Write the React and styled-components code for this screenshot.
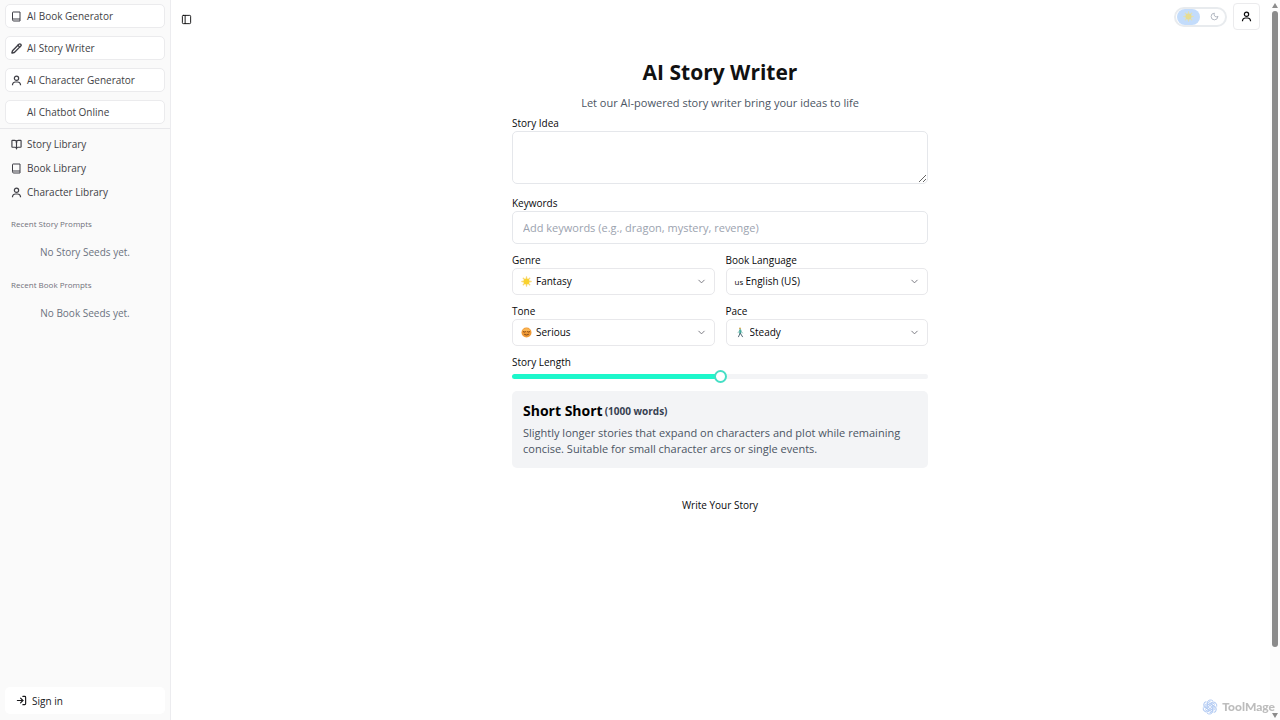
import React, { useState } from "react";
import styled, { createGlobalStyle } from "styled-components";
import { BookOpen, ChevronDown, LogIn, Moon, PanelLeft, Pencil } from "lucide-react";

const GlobalStyle = createGlobalStyle`
  * {
    box-sizing: border-box;
  }
  body {
    margin: 0;
    overflow: hidden;
    background: #fff;
    color: #09090b;
    font-family: "Open Sans", "Noto Sans", sans-serif;
    font-size: 10px;
    line-height: 16px;
  }
  button, input, select, textarea {
    font: inherit;
    color: inherit;
  }
`;

const Page = styled.div`
  display: flex;
  height: 100vh;
`;
const Sidebar = styled.aside`
  display: flex;
  flex-direction: column;
  width: 170px;
  flex-shrink: 0;
  background: #fafafa;
  box-shadow: 1px 0 0 #ececef;
  color: #3f3f46;
`;
const Tools = styled.nav`
  display: flex;
  flex-direction: column;
  gap: 8px;
  padding: 4px 5px;
  border-bottom: 1px solid #e8e8eb;
`;
const ToolLink = styled.a`
  display: flex;
  align-items: center;
  gap: 5px;
  height: 24px;
  padding: 0 5px;
  background: #fff;
  border: 1px solid #ebebed;
  border-radius: 5px;
  color: inherit;
  text-decoration: none;
`;
const IconSlot = styled.span`
  display: flex;
  width: 11px;
  flex-shrink: 0;
`;
const Library = styled.nav`
  display: flex;
  flex-direction: column;
  padding: 3px 5px 12px;
`;
const LibraryLink = styled.a`
  display: flex;
  align-items: center;
  gap: 5px;
  height: 24px;
  padding: 0 6px;
  color: inherit;
  text-decoration: none;
`;
const Recent = styled.section`
  padding: 0 11px 17px;
`;
const RecentTitle = styled.h2`
  margin: 0 0 12px;
  font-size: 8px;
  font-weight: 400;
  color: #71717a;
`;
const RecentEmpty = styled.p`
  margin: 0;
  text-align: center;
  color: #6b7280;
`;
const SignIn = styled.button`
  display: flex;
  align-items: center;
  gap: 5px;
  height: 27px;
  margin: auto 5px 6px;
  padding: 0 11px;
  border: none;
  border-radius: 5px;
  background: #fff;
  color: #18181b;
`;
const Main = styled.main`
  flex: 1;
  min-width: 0;
`;
const TopBar = styled.header`
  display: flex;
  align-items: center;
  gap: 6px;
  padding: 3px 10px 3px 11px;
`;
const PlainButton = styled.button`
  display: flex;
  align-items: center;
  align-self: flex-end;
  height: 22px;
  margin-right: auto;
  padding: 0;
  border: none;
  background: none;
`;
const ThemeSwitch = styled.button`
  display: flex;
  align-items: center;
  justify-content: space-between;
  width: 53px;
  height: 20px;
  padding: 0 6px 0 1px;
  border: 2px solid #e8ebee;
  border-radius: 10px;
  background: #fff;
  color: #9ca3af;
`;
const SwitchKnob = styled.span`
  display: flex;
  align-items: center;
  justify-content: center;
  width: 23px;
  height: 16px;
  border-radius: 8px;
  background: #c3dcfb;
`;
const ProfileButton = styled.button`
  display: flex;
  align-items: center;
  justify-content: center;
  width: 27px;
  height: 27px;
  padding: 0;
  border: 1px solid #ebebed;
  border-radius: 4px;
  background: #fff;
`;
const Content = styled.div`
  max-width: 416px;
  margin: 0 auto;
  padding-top: 23px;
`;
const Title = styled.h1`
  margin: 0 0 7px;
  font-size: 21px;
  font-weight: 700;
  line-height: 32px;
  text-align: center;
  color: #111;
`;
const Subtitle = styled.p`
  margin: 0 0 4px;
  font-size: 11px;
  text-align: center;
  color: #4b5563;
`;
const Form = styled.form`
  display: flex;
  flex-direction: column;
  gap: 8px;
`;
const Field = styled.div`
  display: flex;
  flex-direction: column;
`;
const FieldRow = styled.div`
  display: grid;
  grid-template-columns: 1fr 1fr;
  gap: 11px;
`;
const IdeaBox = styled.textarea`
  height: 53px;
  margin-bottom: 3px;
  padding: 6px 10px;
  border: 1px solid #e5e7eb;
  border-radius: 5px;
  background: #fff;
  resize: vertical;
`;
const KeywordInput = styled.input`
  width: 100%;
  height: 33px;
  padding: 0 10px 1px;
  border: 1px solid #e5e7eb;
  border-radius: 5px;
  background: #fff;
  font-size: 11px;
  &::placeholder {
    color: #9ca3af;
  }
`;
const SelectWrap = styled.div`
  position: relative;
  display: flex;
`;
const Select = styled.select`
  width: 100%;
  height: 27px;
  padding: 0 24px 2px ${(props) => (props.$wide ? "19px" : "23px")};
  appearance: none;
  border: 1px solid #e8e8eb;
  border-radius: 5px;
  background: #fff;
`;
const SelectMark = styled.span`
  position: absolute;
  left: 9px;
  top: 0;
  height: 27px;
  display: flex;
  align-items: center;
  font-size: 8px;
  pointer-events: none;
`;
const SelectArrow = styled(ChevronDown)`
  position: absolute;
  right: 8px;
  top: 8px;
  color: #71717a;
  pointer-events: none;
`;
const Slider = styled.input`
  width: 100%;
  height: 13px;
  margin: 0;
  appearance: none;
  background: none;
  &::-webkit-slider-runnable-track {
    height: 5px;
    border-radius: 3px;
    background: linear-gradient(
      to right,
      #1df7cb ${(props) => props.$fill}%,
      #f3f4f6 ${(props) => props.$fill}%
    );
  }
  &::-webkit-slider-thumb {
    appearance: none;
    width: 13px;
    height: 13px;
    margin-top: -4px;
    border: 2px solid #45dfc5;
    border-radius: 50%;
    background: #fff;
  }
`;
const LengthCard = styled.div`
  padding: 11px;
  border-radius: 5px;
  background: #f3f4f6;
`;
const LengthTitle = styled.h3`
  display: flex;
  align-items: center;
  gap: 2px;
  margin: 0 0 5px;
  font-size: 14px;
  line-height: 18px;
  color: #000;
`;
const WordCount = styled.span`
  font-size: 10px;
  color: #374151;
`;
const LengthText = styled.p`
  margin: 0;
  font-size: 11px;
  color: #4b5563;
`;
const SubmitButton = styled.button`
  align-self: center;
  margin-top: 16px;
  padding: 5px 11px;
  border: none;
  background: none;
`;
const Rail = styled.div`
  display: flex;
  flex-direction: column;
  align-items: center;
  gap: 2px;
  width: 10px;
  padding: 3px 0 2px;
  flex-shrink: 0;
  background: #fcfcfc;
`;
const RailTrack = styled.div`
  flex: 1;
`;
const RailThumb = styled.div`
  width: 6px;
  height: 91%;
  border-radius: 3px;
  background: #8b8b8b;
`;
const Watermark = styled.div`
  position: fixed;
  right: 5px;
  bottom: 4px;
  display: flex;
  align-items: center;
  gap: 4px;
  font-family: Lato, sans-serif;
  font-size: 12px;
  font-weight: 900;
  line-height: 18px;
  color: #bdbdbd;
`;

const BookIcon = () => (
  <svg width="11" height="11" viewBox="0 0 22 22" fill="none" stroke="currentColor" strokeWidth="2">
    <path d="M4 2h14v18H5.500A2.500 2.500 0 0 1 3 17.500V3a1 1 0 0 1 1-1z" strokeLinejoin="round" />
    <path d="M3 16h15" />
  </svg>
);

const UserIcon = () => (
  <svg width="11" height="11" viewBox="0 0 22 22" fill="none" stroke="currentColor" strokeWidth="2.4">
    <circle cx="11" cy="6.500" r="4.300" />
    <path d="M3 20.500v-1.500a6 6 0 0 1 6-5h4a6 6 0 0 1 6 5v1.500" />
  </svg>
);

const SunIcon = ({ size, color, core }) => (
  <svg width={size} height={size} viewBox="0 0 24 24">
    <g stroke={color} strokeWidth="3" strokeLinecap="round">
      <path d="M12 2v20M2 12h20M5 5l14 14M19 5L5 19" />
    </g>
    <circle cx="12" cy="12" r="6.5" fill={core} />
  </svg>
);

const FaceIcon = () => (
  <svg width="11" height="11" viewBox="0 0 22 22">
    <circle cx="11" cy="11" r="10" fill="#f09a35" />
    <path d="M3 8a8.5 8.5 0 0 1 16 0z" fill="#fbb654" />
    <path
      d="M4.500 9.500q2 2 4.500 0M13 9.500q2.500 2 4.500 0M7 15q4 2.500 8 0"
      fill="none"
      stroke="#713d17"
      strokeWidth="1.700"
      strokeLinecap="round"
    />
  </svg>
);

const WalkerIcon = () => (
  <svg width="11" height="11" viewBox="0 0 22 22" fill="none" strokeLinecap="round">
    <circle cx="10" cy="3" r="2" fill="#d5a64e" />
    <path d="M10.500 6.500v6" stroke="#3ba79b" strokeWidth="4" />
    <path d="M9 7.500l-3 4M12 8l3 4" stroke="#79b8ae" strokeWidth="1.500" />
    <path d="M10 13l-3 6.500M11 13l4 6.500" stroke="#576b78" strokeWidth="2" />
  </svg>
);

const petals = [0, 60, 120, 180, 240, 300];

const KnotLogo = () => (
  <svg width="16" height="16" viewBox="0 0 32 32" fill="none" stroke="#b3cbf3" strokeWidth="2">
    {petals.map((angle) => (
      <path
        key={angle}
        transform={`rotate(${angle} 16 16)`}
        d="M10 18V9a7 7 0 0 1 12-5M10 13l7-4a7 7 0 0 1 9 2"
      />
    ))}
    <circle cx="16" cy="16" r="3" />
  </svg>
);

const tools = [
  { name: "AI Book Generator", icon: <BookIcon /> },
  { name: "AI Story Writer", icon: <Pencil size={11} strokeWidth={3} /> },
  { name: "AI Character Generator", icon: <UserIcon /> },
  { name: "AI Chatbot Online" },
];

const libraries = [
  { name: "Story Library", icon: <BookOpen size={11} strokeWidth={2.5} /> },
  { name: "Book Library", icon: <BookIcon /> },
  { name: "Character Library", icon: <UserIcon /> },
];

const SelectField = ({ id, label, mark, options, wide }) => (
  <Field>
    <label htmlFor={id}>{label}</label>
    <SelectWrap>
      <Select id={id} $wide={wide}>
        {options.map((option) => (
          <option key={option}>{option}</option>
        ))}
      </Select>
      <SelectMark>{mark}</SelectMark>
      <SelectArrow size={11} />
    </SelectWrap>
  </Field>
);

const App = () => {
  const [idea, setIdea] = useState("");
  const [keywords, setKeywords] = useState("");
  const [length, setLength] = useState(50);
  const [light, setLight] = useState(true);

  const handleSubmit = (e) => {
    e.preventDefault();
  };

  return (
    <Page>
      <GlobalStyle />
      <Sidebar>
        <Tools>
          {tools.map((tool) => (
            <ToolLink key={tool.name} href="#">
              <IconSlot>{tool.icon}</IconSlot>
              {tool.name}
            </ToolLink>
          ))}
        </Tools>
        <Library>
          {libraries.map((item) => (
            <LibraryLink key={item.name} href="#">
              <IconSlot>{item.icon}</IconSlot>
              {item.name}
            </LibraryLink>
          ))}
        </Library>
        <Recent>
          <RecentTitle>Recent Story Prompts</RecentTitle>
          <RecentEmpty>No Story Seeds yet.</RecentEmpty>
        </Recent>
        <Recent>
          <RecentTitle>Recent Book Prompts</RecentTitle>
          <RecentEmpty>No Book Seeds yet.</RecentEmpty>
        </Recent>
        <SignIn type="button">
          <LogIn size={11} strokeWidth={2.5} />
          Sign in
        </SignIn>
      </Sidebar>
      <Main>
        <TopBar>
          <PlainButton type="button" aria-label="Toggle sidebar">
            <PanelLeft size={11} />
          </PlainButton>
          <ThemeSwitch
            type="button"
            role="switch"
            aria-checked={light}
            aria-label="Light theme"
            onClick={() => setLight(!light)}
          >
            <SwitchKnob>
              <SunIcon size={11} color="#e0dfb4" core="#e6dc90" />
            </SwitchKnob>
            <Moon size={9} />
          </ThemeSwitch>
          <ProfileButton type="button" aria-label="Account">
            <UserIcon />
          </ProfileButton>
        </TopBar>
        <Content>
          <Title>AI Story Writer</Title>
          <Subtitle>Let our AI-powered story writer bring your ideas to life</Subtitle>
          <Form onSubmit={handleSubmit}>
            <Field>
              <label htmlFor="idea">Story Idea</label>
              <IdeaBox id="idea" value={idea} onChange={(e) => setIdea(e.target.value)} />
            </Field>
            <Field>
              <label htmlFor="keywords">Keywords</label>
              <KeywordInput
                id="keywords"
                placeholder="Add keywords (e.g., dragon, mystery, revenge)"
                value={keywords}
                onChange={(e) => setKeywords(e.target.value)}
              />
            </Field>
            <FieldRow>
              <SelectField
                id="genre"
                label="Genre"
                mark={<SunIcon size={11} color="#f7d775" core="#f9d22e" />}
                options={["Fantasy"]}
              />
              <SelectField
                id="language"
                label="Book Language"
                mark="us"
                options={["English (US)"]}
                wide
              />
            </FieldRow>
            <FieldRow>
              <SelectField id="tone" label="Tone" mark={<FaceIcon />} options={["Serious"]} />
              <SelectField id="pace" label="Pace" mark={<WalkerIcon />} options={["Steady"]} />
            </FieldRow>
            <Field>
              <label htmlFor="length">Story Length</label>
              <Slider
                id="length"
                type="range"
                min="0"
                max="100"
                value={length}
                $fill={length}
                onChange={(e) => setLength(Number(e.target.value))}
              />
            </Field>
            <LengthCard>
              <LengthTitle>
                Short Short <WordCount>(1000 words)</WordCount>
              </LengthTitle>
              <LengthText>
                Slightly longer stories that expand on characters and plot while remaining
                concise. Suitable for small character arcs or single events.
              </LengthText>
            </LengthCard>
            <SubmitButton type="submit">Write Your Story</SubmitButton>
          </Form>
        </Content>
      </Main>
      <Rail>
        <svg width="6" height="6" viewBox="0 0 6 6" fill="#8b8b8b">
          <path d="M3 0l3 5H0z" />
        </svg>
        <RailTrack>
          <RailThumb />
        </RailTrack>
        <svg width="6" height="6" viewBox="0 0 6 6" fill="#8b8b8b">
          <path d="M3 6l3-5H0z" />
        </svg>
      </Rail>
      <Watermark>
        <KnotLogo />
        ToolMage
      </Watermark>
    </Page>
  );
};

export default App;
